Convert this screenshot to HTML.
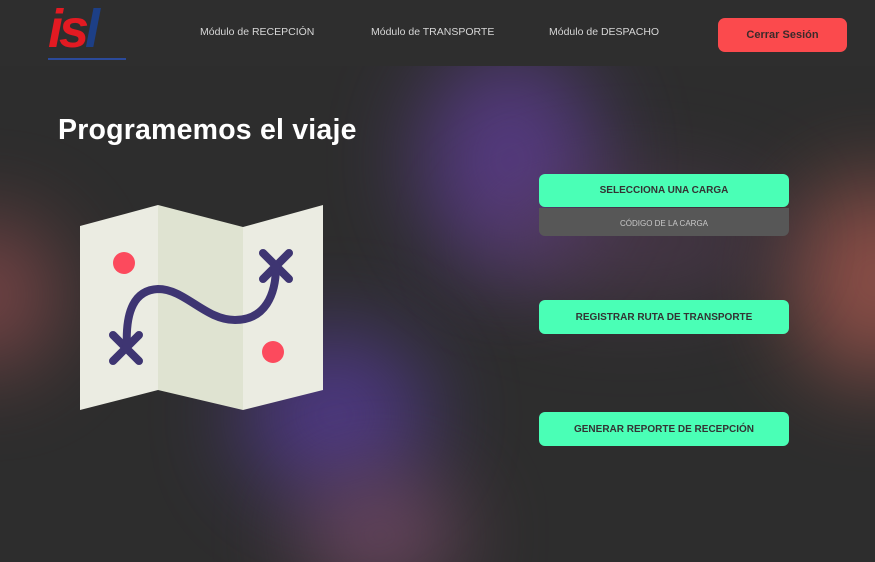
<!DOCTYPE html>
<html><head><meta charset="utf-8"><style>
*{margin:0;padding:0;box-sizing:border-box}
body{width:875px;height:562px;overflow:hidden;background:#2d2d2d;font-family:"Liberation Sans",sans-serif;position:relative}
.bg{position:absolute;inset:0;overflow:hidden}
.blob{position:absolute;border-radius:50%;filter:blur(45px)}
.hdr{position:absolute;left:0;top:0;width:875px;height:66px;background:#2e2e2e}
.nav{position:absolute;top:26px;color:#d6d6d6;font-size:10.5px}
.btn{position:absolute;background:#4affb6;border-radius:6px;color:#333;font-weight:bold;font-size:10px;text-align:center}
</style></head><body>
<div class="bg">
<div class="blob" style="left:420px;top:50px;width:180px;height:220px;background:#5b3c8e;opacity:.85"></div>
<div class="blob" style="left:790px;top:180px;width:170px;height:200px;background:#a4574e;opacity:.8"></div>
<div class="blob" style="left:-90px;top:220px;width:150px;height:150px;background:#8a4a4c;opacity:.8"></div>
<div class="blob" style="left:240px;top:330px;width:190px;height:170px;background:#523a90;opacity:.85"></div>
<div class="blob" style="left:300px;top:480px;width:160px;height:110px;background:#7d4e6e;opacity:.8"></div>
<div class="blob" style="left:480px;top:180px;width:300px;height:120px;background:#604060;opacity:.5"></div>
</div>
<div class="hdr"></div>
<div style="position:absolute;left:48px;top:0px;font:italic bold 54px/58px 'Liberation Sans',sans-serif;letter-spacing:-4px"><span style="color:#e31a22">is</span><span style="color:#1d3f86">l</span></div>
<div style="position:absolute;left:48px;top:58px;width:78px;height:2px;background:#2b4a9a"></div>
<div class="nav" style="left:200px">Módulo de RECEPCIÓN</div>
<div class="nav" style="left:371px">Módulo de TRANSPORTE</div>
<div class="nav" style="left:549px">Módulo de DESPACHO</div>
<div style="position:absolute;left:718px;top:18px;width:129px;height:34px;background:#fb4a4d;border-radius:7px;color:#3a2a2a;font-size:11px;font-weight:bold;text-align:center;line-height:34px">Cerrar Sesión</div>
<div style="position:absolute;left:58px;top:114px;color:#fff;font-size:28.5px;font-weight:bold;letter-spacing:0.2px">Programemos el viaje</div>
<svg style="position:absolute;left:0;top:0" width="875" height="562">
<polygon points="80,226 158,205 158,390 80,410" fill="#ebece2"/>
<polygon points="158,205 243,227 243,410 158,390" fill="#dfe3d1"/>
<polygon points="243,227 323,205 323,390 243,410" fill="#ebece2"/>
<circle cx="124" cy="263" r="11" fill="#fc4a5d"/>
<circle cx="273" cy="352" r="11" fill="#fc4a5d"/>
<g stroke="#3e3572" stroke-width="8" stroke-linecap="round" fill="none">
<path d="M113,335 L139,361 M139,335 L113,361"/>
<path d="M263,253 L289,279 M289,253 L263,279"/>
<path d="M127,348 C125,310 135,290 158,289 C185,289 205,320 235,320 C265,320 276,295 276,266"/>
</g>
</svg>
<div class="btn" style="left:539px;top:208px;width:250px;height:28px;background:#575757;color:#c8c8c8;font-weight:normal;font-size:8px;line-height:32px;border-radius:0 0 6px 6px">CÓDIGO DE LA CARGA</div>
<div class="btn" style="left:539px;top:174px;width:250px;height:33px;line-height:34px">SELECCIONA UNA CARGA</div>
<div class="btn" style="left:539px;top:300px;width:250px;height:34px;line-height:36px">REGISTRAR RUTA DE TRANSPORTE</div>
<div class="btn" style="left:539px;top:412px;width:250px;height:34px;line-height:36px">GENERAR REPORTE DE RECEPCIÓN</div>
</body></html>
